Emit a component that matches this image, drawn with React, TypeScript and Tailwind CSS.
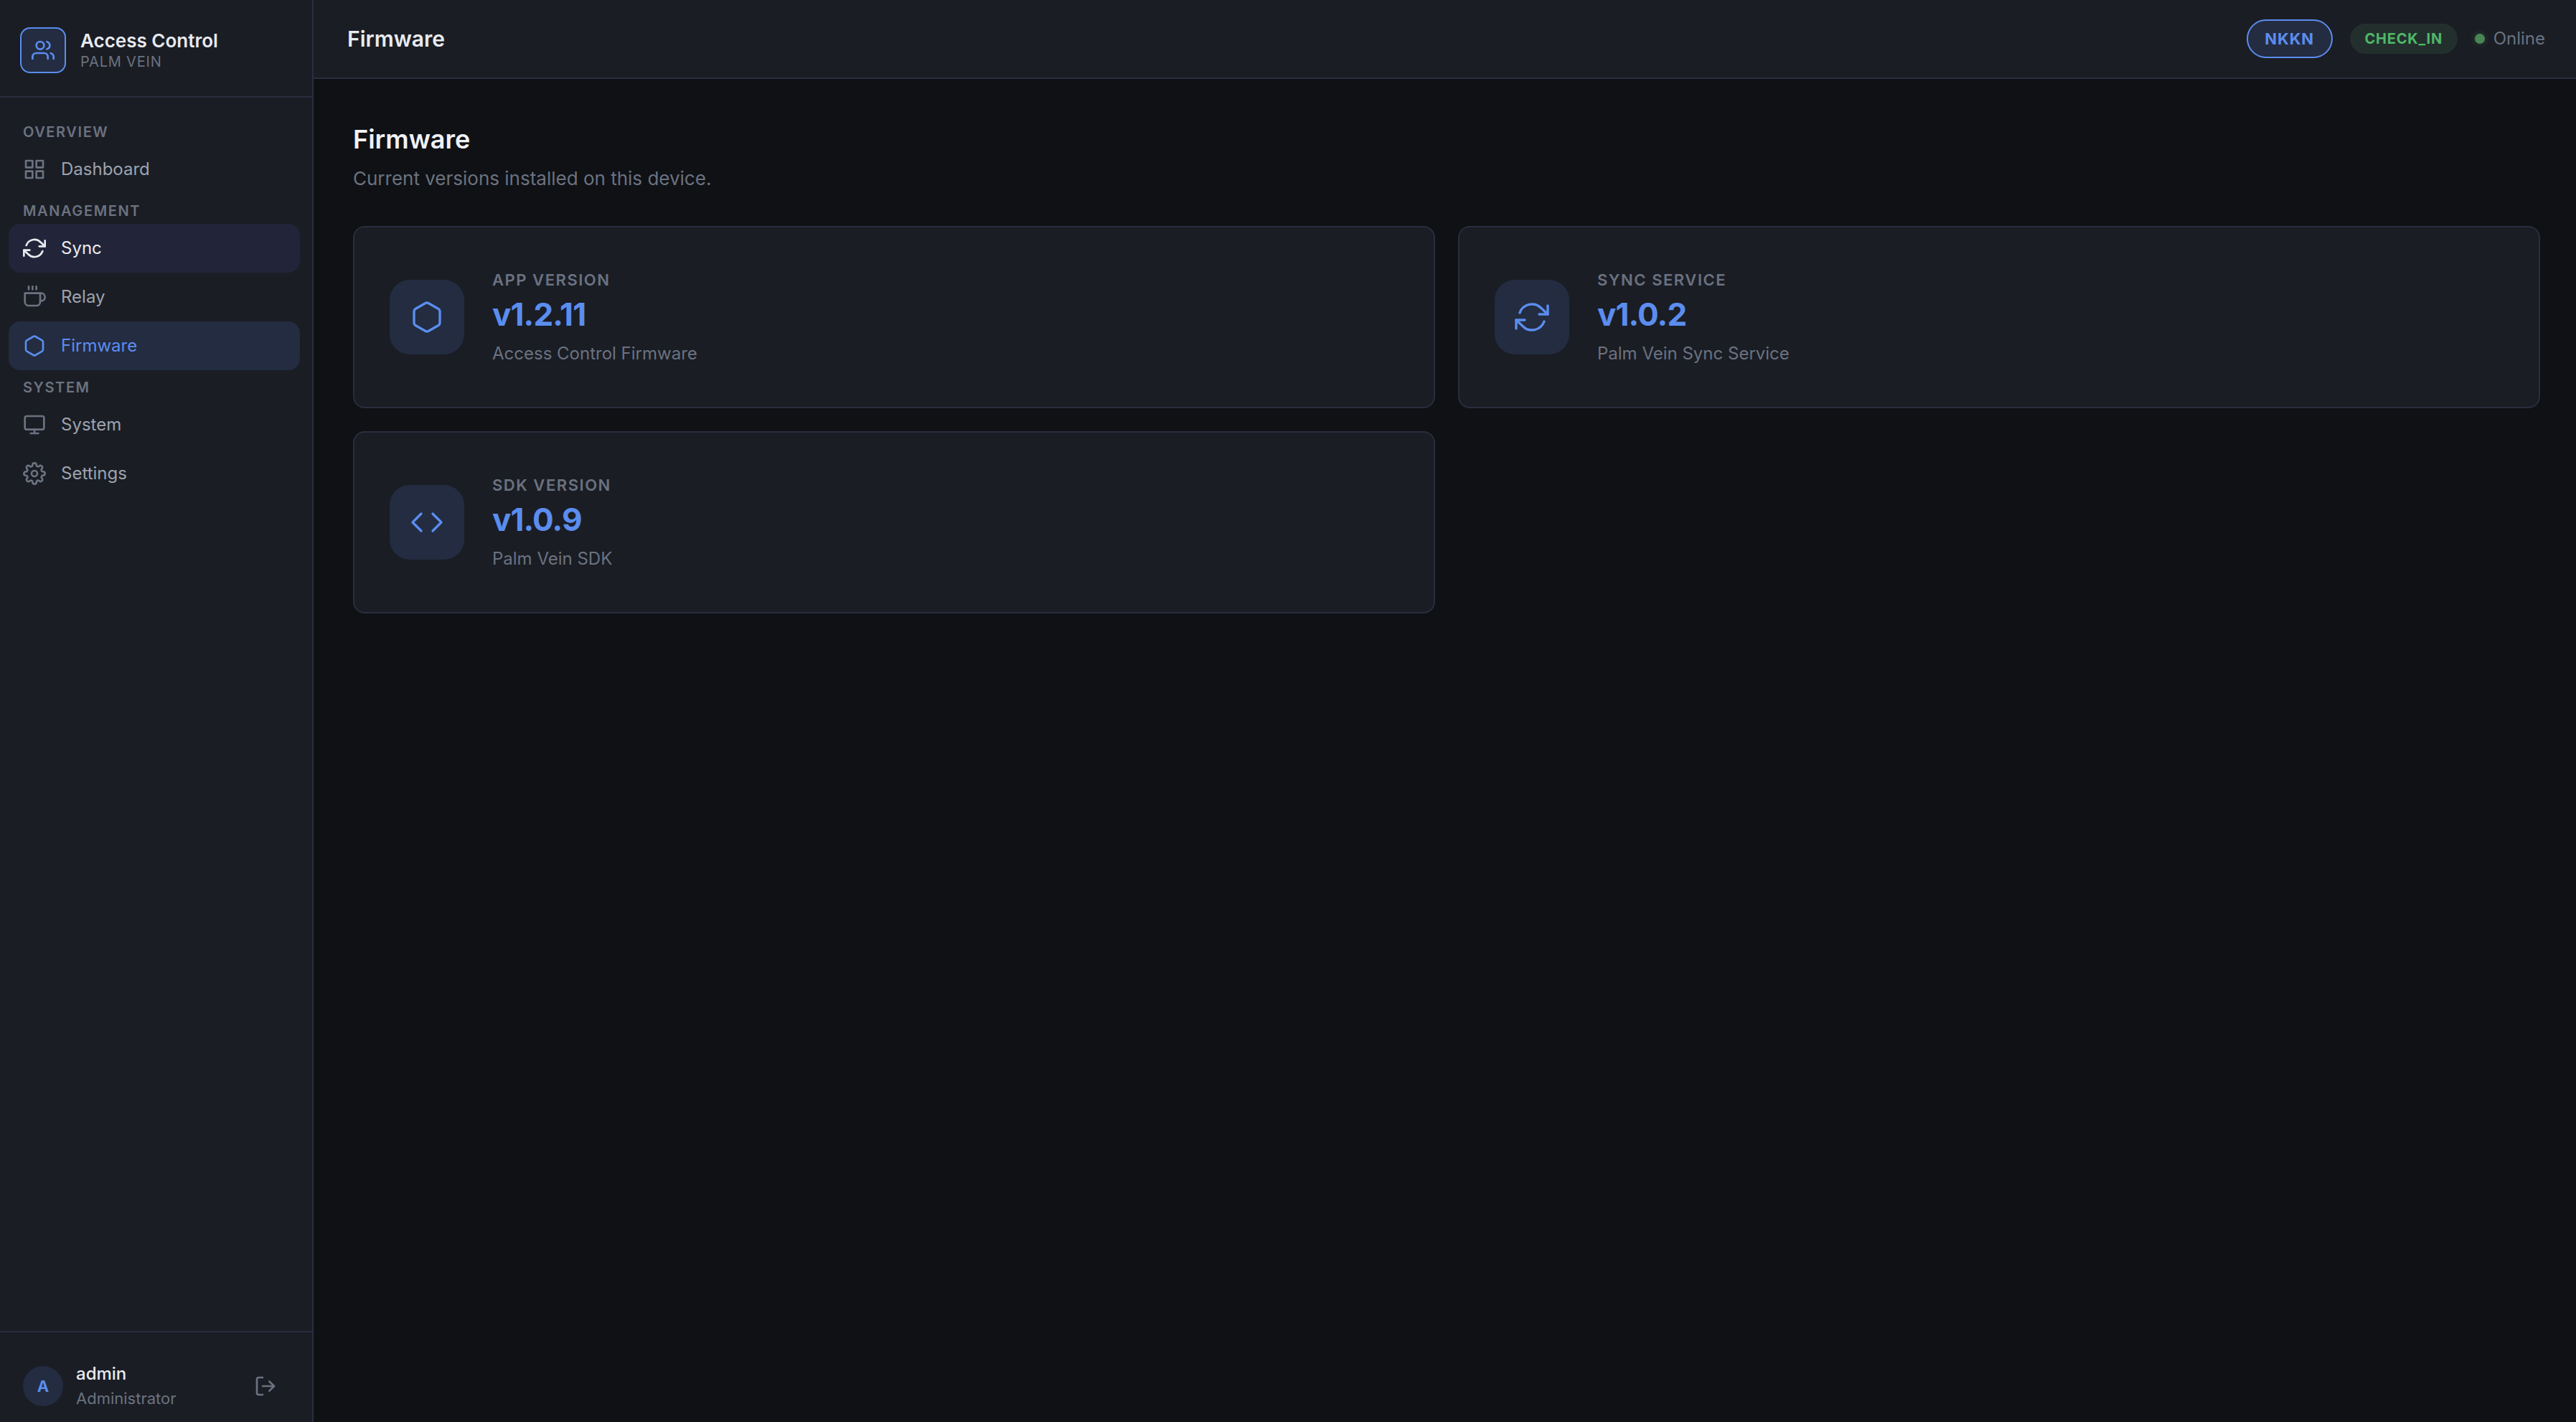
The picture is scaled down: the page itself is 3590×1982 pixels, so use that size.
import React from 'react'
import { FiCode, FiCoffee, FiGrid, FiHexagon, FiLogOut, FiMonitor, FiRefreshCw, FiSettings, FiUsers } from 'react-icons/fi'

const NavLabel = ({ text }: { text: string }) => (
    <div className="px-5 pt-[9px] pb-[3px] text-[20px] leading-[30px] font-semibold tracking-[0.08em] text-[#6b7280]">{text}</div>
)

const NavItem = ({ icon, text, state }: { icon: React.ReactNode; text: string; state?: 'hover' | 'active' }) => {
    let cls = 'text-[#9ca3af]'
    if (state === 'hover') cls = 'bg-[#222539] text-[#e8eaf0]'
    if (state === 'active') cls = 'bg-[#232c40] text-[#5b8def]'
    return (
        <div className={`flex items-center gap-[21px] h-[68px] px-5 rounded-[16px] text-[24px] ${cls}`}>
            <span className={state ? '' : 'text-[#6b7280]'}>{icon}</span>
            <span>{text}</span>
        </div>
    )
}

const VersionCard = ({ icon, label, version, desc }: { icon: React.ReactNode; label: string; version: string; desc: string }) => (
    <div className="flex items-center gap-[39px] h-[254px] pl-[49px] bg-[#1a1d24] border-2 border-[#2a2d3e] rounded-[16px]">
        <div className="flex items-center justify-center w-[104px] h-[104px] rounded-[28px] bg-[#232c40] text-[#5b8def]">{icon}</div>
        <div>
            <div className="mb-1 text-[22px] leading-[32px] font-semibold tracking-[0.07em] text-[#6b7280]">{label}</div>
            <div className="text-[44px] leading-[56px] font-bold tracking-[-0.02em] text-[#5b8def]">{version}</div>
            <div className="mt-[9px] text-[24px] leading-[36px] text-[#6b7280]">{desc}</div>
        </div>
    </div>
)

export default function App() {
    return (
        <div className="flex w-full h-screen overflow-hidden bg-[#0f1115] font-['Inter',sans-serif]">
            <aside className="flex flex-col shrink-0 w-[437px] bg-[#1a1d24] border-r-2 border-[#2a2d3e]">
                <div className="flex items-center gap-5 h-[136px] pl-7 pt-[6px] border-b-2 border-[#2a2d3e]">
                    <div className="flex items-center justify-center w-16 h-16 rounded-[14px] border-2 border-[#5b8def] bg-[#232c40] text-[#5b8def]">
                        <FiUsers size={32} />
                    </div>
                    <div>
                        <div className="text-[26px] leading-[32px] font-semibold text-[#e8eaf0]">Access Control</div>
                        <div className="text-[20px] leading-[26px] tracking-[0.04em] text-[#6b7280]">PALM VEIN</div>
                    </div>
                </div>
                <nav className="flex-1 pl-3 pr-[17px] pt-6">
                    <NavLabel text="OVERVIEW" />
                    <NavItem icon={<FiGrid size={32} />} text="Dashboard" />
                    <NavLabel text="MANAGEMENT" />
                    <NavItem icon={<FiRefreshCw size={32} />} text="Sync" state="hover" />
                    <NavItem icon={<FiCoffee size={32} />} text="Relay" />
                    <NavItem icon={<FiHexagon size={32} />} text="Firmware" state="active" />
                    <NavLabel text="SYSTEM" />
                    <NavItem icon={<FiMonitor size={32} />} text="System" />
                    <NavItem icon={<FiSettings size={32} />} text="Settings" />
                </nav>
                <div className="flex items-center gap-[18px] pl-8 pr-[49px] pt-10 pb-[15px] border-t-2 border-[#2a2d3e]">
                    <div className="flex items-center justify-center w-14 h-14 rounded-full bg-[#232c40] text-[22px] font-bold text-[#5b8def]">A</div>
                    <div className="flex-1">
                        <div className="text-[24px] leading-[35px] font-medium text-[#e8eaf0]">admin</div>
                        <div className="text-[22px] leading-[35px] text-[#6b7280]">Administrator</div>
                    </div>
                    <span className="text-[#6b7280]"><FiLogOut size={32} /></span>
                </div>
            </aside>
            <main className="flex flex-col flex-1 min-w-0">
                <header className="flex items-center justify-between h-[110px] pl-[47px] pr-[43px] bg-[#1a1d24] border-b-2 border-[#2a2d3e]">
                    <h2 className="text-[30px] font-semibold text-[#e8eaf0]">Firmware</h2>
                    <div className="flex items-center">
                        <span className="flex items-center justify-center w-[120px] h-[54px] rounded-full border-2 border-[#5b8def] bg-[#232c40] text-[22px] font-bold tracking-[0.04em] text-[#5b8def]">NKKN</span>
                        <span className="flex items-center justify-center ml-6 w-[150px] h-[42px] rounded-full bg-[#232f2d] text-[20px] font-bold tracking-[0.04em] text-[#4fb868]">CHECK_IN</span>
                        <span className="ml-6 w-[14px] h-[14px] rounded-full bg-[#4a8555] shadow-[0_0_10px_rgba(74,133,85,0.4)]" />
                        <span className="ml-3 text-[24px] text-[#6b7280]">Online</span>
                    </div>
                </header>
                <div className="pl-[55px] pr-[50px] pt-[59px]">
                    <h1 className="text-[36px] leading-[50px] font-semibold text-[#f0f1f5]">Firmware</h1>
                    <p className="mt-[10px] text-[26px] leading-[40px] text-[#6b7280]">Current versions installed on this device.</p>
                    <div className="grid grid-cols-2 gap-8 mt-[46px]">
                        <VersionCard icon={<FiHexagon size={48} strokeWidth={1.7} />} label="APP VERSION" version="v1.2.11" desc="Access Control Firmware" />
                        <VersionCard icon={<FiRefreshCw size={48} strokeWidth={1.7} />} label="SYNC SERVICE" version="v1.0.2" desc="Palm Vein Sync Service" />
                        <VersionCard icon={<FiCode size={48} strokeWidth={1.7} />} label="SDK VERSION" version="v1.0.9" desc="Palm Vein SDK" />
                    </div>
                </div>
            </main>
        </div>
    )
}
